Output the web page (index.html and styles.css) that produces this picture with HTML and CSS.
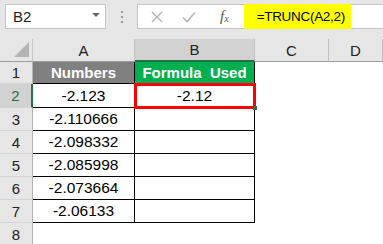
FILE: index.html
```html
<!DOCTYPE html>
<html>
<head>
    <title>TRUNC example</title>
    <link rel="stylesheet" href="styles.css">
</head>
<body>
    <div class="app">
        <!-- formula bar -->
        <div class="toolbar">
            <div class="name-box">
                <span>B2</span>
                <span class="caret"></span>
            </div>
            <div class="grip"><i></i><i></i><i></i></div>
            <div class="formula-box">
                <svg class="icon" width="12" height="12" viewBox="0 0 12 12"><path d="M1 1 L11 11 M11 1 L1 11" stroke="#b4b4b4" stroke-width="1.4" fill="none"/></svg>
                <svg class="icon check" width="14" height="12" viewBox="0 0 14 12"><path d="M1 6.5 L5 10.5 L13 1.5" stroke="#b4b4b4" stroke-width="1.6" fill="none"/></svg>
                <span class="fx">f<sub>x</sub></span>
                <div class="formula">=TRUNC(A2,2)</div>
            </div>
        </div>

        <!-- sheet -->
        <div class="sheet">
            <div class="corner"><span class="tri"></span></div>
            <div class="col-head">A</div>
            <div class="col-head active">B</div>
            <div class="col-head">C</div>
            <div class="col-head">D</div>

            <div class="row-head">1</div>
            <div class="cell data head-grey">Numbers</div>
            <div class="cell data head-green">Formula&nbsp; Used</div>
            <div class="cell"></div>
            <div class="cell"></div>

            <div class="row-head active">2</div>
            <div class="cell data">-2.123</div>
            <div class="cell data selected">-2.12</div>
            <div class="cell"></div>
            <div class="cell"></div>

            <div class="row-head">3</div>
            <div class="cell data">-2.110666</div>
            <div class="cell data"></div>
            <div class="cell"></div>
            <div class="cell"></div>

            <div class="row-head">4</div>
            <div class="cell data">-2.098332</div>
            <div class="cell data"></div>
            <div class="cell"></div>
            <div class="cell"></div>

            <div class="row-head">5</div>
            <div class="cell data">-2.085998</div>
            <div class="cell data"></div>
            <div class="cell"></div>
            <div class="cell"></div>

            <div class="row-head">6</div>
            <div class="cell data">-2.073664</div>
            <div class="cell data"></div>
            <div class="cell"></div>
            <div class="cell"></div>

            <div class="row-head">7</div>
            <div class="cell data">-2.06133</div>
            <div class="cell data"></div>
            <div class="cell"></div>
            <div class="cell"></div>

            <div class="row-head">8</div>
            <div class="cell"></div>
            <div class="cell"></div>
            <div class="cell"></div>
            <div class="cell"></div>
        </div>
    </div>
</body>
</html>
```

FILE: styles.css
```css
* { box-sizing: border-box; }
body { margin: 0; font-family: "Liberation Sans", Arial, sans-serif; font-size: 15px; color: #000; background: #fff; overflow: hidden; }
.app { width: 383px; height: 244px; overflow: hidden; }

.toolbar { height: 39px; background: #e6e6e6; display: flex; align-items: flex-start; padding: 4px 0 0 5px; }
.name-box { width: 101px; height: 25px; background: #fff; border: 1px solid #c6c6c6; display: flex; align-items: center; justify-content: space-between; padding: 0 5px 0 7px; color: #222; }
.caret { width: 0; height: 0; border-left: 4px solid transparent; border-right: 4px solid transparent; border-top: 4px solid #6b6b6b; margin-top: -3px; }
.grip { width: 31px; height: 25px; display: flex; flex-direction: column; align-items: center; justify-content: center; gap: 3px; }
.grip i { width: 2px; height: 2px; background: #9a9a9a; display: block; }
.formula-box { flex: 1; height: 25px; background: #fff; border: 1px solid #c6c6c6; border-right: none; display: flex; align-items: center; padding-left: 13px; }
.icon { display: block; }
.check { margin-left: 19px; }
.fx { margin-left: 24px; font-family: "Liberation Serif", serif; font-style: italic; color: #555; font-size: 15px; }
.fx sub { font-size: 10px; vertical-align: -1px; }
.formula { background: #ffff00; height: 25px; margin: -1px 0 0 15px; width: 107px; display: flex; align-items: center; padding-left: 13px; font-size: 13.5px; letter-spacing: -0.3px; }

.sheet { display: grid; grid-template-columns: 33px 102px 120px 74px 1fr; grid-template-rows: 23px 22px 24px 23px 23px 23px 23px 23px 23px; }
.corner { background: #e6e6e6; border-right: 1px solid #c8c8c8; border-bottom: 1px solid #9b9b9b; position: relative; }
.tri { position: absolute; right: 3px; bottom: 4px; width: 0; height: 0; border-left: 15px solid transparent; border-bottom: 15px solid #b4b4b4; }
.col-head { background: #e6e6e6; border-right: 1px solid #c0c0c0; border-bottom: 1px solid #9b9b9b; display: flex; align-items: center; justify-content: center; color: #222; }
.col-head.active { background: #d2d2d2; border-bottom: 2px solid #217346; }
.row-head { background: #e6e6e6; border-right: 1px solid #b4b4b4; border-bottom: 1px solid #d4d4d4; display: flex; align-items: center; justify-content: center; color: #222; }
.row-head.active { background: #d2d2d2; color: #217346; border-right: 2px solid #217346; }

.cell { display: flex; align-items: center; justify-content: center; white-space: nowrap; }
.cell.data { border-right: 1px solid #000; border-bottom: 1px solid #000; font-size: 15.5px; }
.head-grey { background: #808080; color: #fff; font-weight: bold; font-size: 15px !important; }
.head-green { background: #00b050; color: #fff; font-weight: bold; font-size: 15px !important; }
.selected { position: relative; }
.selected::after { content: ""; position: absolute; top: -1px; left: -1px; right: -2px; bottom: -2px; border: 3px solid #ff0000; }
.selected::before { content: ""; position: absolute; right: -3px; bottom: -3px; width: 4px; height: 4px; background: #217346; z-index: 1; }
```
